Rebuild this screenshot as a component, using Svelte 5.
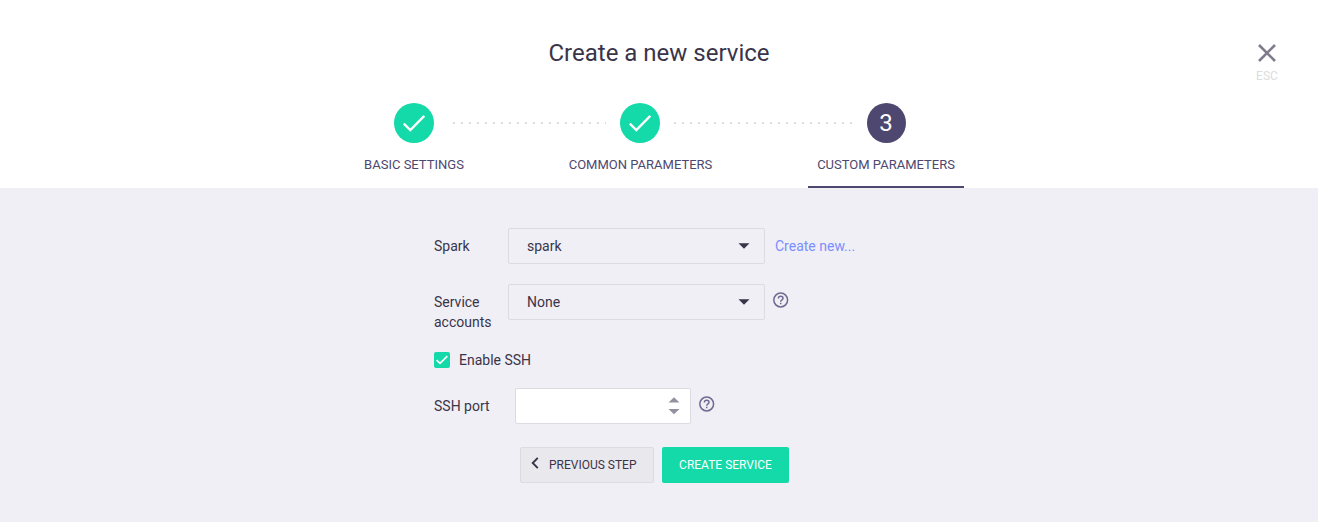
<script>
  const steps = [
    { label: 'BASIC SETTINGS', done: true, width: 118 },
    { label: 'COMMON PARAMETERS', done: true, width: 161 },
    { label: 'CUSTOM PARAMETERS', done: false, width: 156 },
  ];
  let ssh = $state(true);
</script>

{#snippet help()}
  <svg class="help" width="16" height="16" viewBox="0 0 16 16" fill="none" stroke="#6e6990">
    <circle cx="7.7" cy="8" r="6.9" stroke-width="1.5" />
    <path d="M5.4 6.5C5.4 5.1 6.4 4.3 7.7 4.3S10 5.2 10 6.4C10 7.9 7.7 8 7.7 9.7M7.7 10.8V12.3" stroke-width="1.5" />
  </svg>
{/snippet}

<div class="page">
  <header>
    <h1>Create a new service</h1>
    <button class="close" aria-label="Close">
      <svg width="20" height="20" viewBox="0 0 20 20"><path d="M2 2L18 18M18 2L2 18" stroke="#7f7b8c" stroke-width="2.6" fill="none" /></svg>
      <span>ESC</span>
    </button>
    <nav>
      {#each steps as step, i}
        {#if i > 0}<div class="line line{i}"></div>{/if}
        <div class="step" class:active={!step.done} style="width: {step.width}px">
          <div class="circle">
            {#if step.done}
              <svg width="40" height="40" viewBox="0 0 40 40"><path d="M9.8 20.6L16.3 27L30.3 12.8" fill="none" stroke="#fff" stroke-width="2.4" /></svg>
            {:else}{i + 1}{/if}
          </div>
          <span class="label">{step.label}</span>
        </div>
      {/each}
    </nav>
  </header>

  <main>
    <div class="row spark">
      <span class="name">Spark</span>
      <div class="select">spark<svg width="12" height="6" viewBox="0 0 12 6"><path d="M.5 .3H11.5L6 5.8Z" fill="#3a3449" /></svg></div>
      <a href="#new">Create new...</a>
    </div>
    <div class="row accounts">
      <span class="name">Service accounts</span>
      <div class="select">None<svg width="12" height="6" viewBox="0 0 12 6"><path d="M.5 .3H11.5L6 5.8Z" fill="#3a3449" /></svg></div>
      {@render help()}
    </div>
    <button class="check" role="checkbox" aria-checked={ssh} onclick={() => (ssh = !ssh)}>
      <span class="box"><svg width="16" height="16" viewBox="0 0 16 16">{#if ssh}<path d="M2.6 8.2L6 11.4L13.3 4.2" fill="none" stroke="#fff" stroke-width="1.7" />{/if}</svg></span>
      Enable SSH
    </button>
    <div class="row port">
      <span class="name">SSH port</span>
      <div class="number">
        <svg width="12" height="18" viewBox="0 0 12 18" fill="#93909f"><path d="M.5 5.5L6 .2L11.5 5.5ZM.5 12L6 17.3L11.5 12Z" /></svg>
      </div>
      {@render help()}
    </div>
    <div class="actions">
      <button class="prev">
        <svg width="8" height="12" viewBox="0 0 8 12"><path d="M6.8 .8L1.7 6L6.8 11.2" fill="none" stroke="#3a3449" stroke-width="1.9" /></svg>PREVIOUS STEP
      </button>
      <button class="create">CREATE SERVICE</button>
    </div>
  </main>
</div>

<style>
  :global(body) { margin: 0; }
  .page {
    position: relative;
    height: 522px;
    overflow: hidden;
    background: #f0eff5;
    color: #3a3449;
    font: 14px/20px Roboto, sans-serif;
  }
  button { border: 0; padding: 0; background: none; color: inherit; font: inherit; }
  header { box-sizing: border-box; height: 188px; padding-top: 37px; background: #fff; }
  h1 { margin: 0; font-size: 24px; line-height: 32px; font-weight: 400; text-align: center; }
  .close { position: absolute; top: 43px; left: 1247px; width: 40px; display: flex; flex-direction: column; align-items: center; }
  .close span { margin-top: 6px; font-size: 12px; line-height: 14px; color: #dddce0; }
  nav { display: flex; margin: 34px 0 0 355px; }
  .step { box-sizing: border-box; height: 85px; display: flex; flex-direction: column; align-items: center; }
  .step.active { border-bottom: 2px solid #4e4770; }
  .circle { width: 40px; height: 40px; border-radius: 50%; background: #14d9a8; color: #fff; font-size: 24px; line-height: 40px; text-align: center; }
  .line1 + .step .circle { margin-right: 1px; }
  .active .circle { width: 39px; background: #4e4770; }
  .circle svg { display: block; }
  .label { margin-top: 12px; font-size: 13px; color: #4e4770; white-space: nowrap; }
  .line { height: 2px; margin-top: 19px; background: repeating-linear-gradient(90deg, #dddce0 0 2px, transparent 2px 8px); }
  .line1 { width: 153px; margin-left: -20px; margin-right: -46px; }
  .line2 { width: 180px; margin-left: -47px; margin-right: -46px; }

  main { padding: 40px 0 0 434px; }
  .row { display: flex; align-items: flex-start; }
  .name { width: 74px; flex: none; padding-top: 8px; }
  .spark { height: 56px; }
  .accounts { height: 66px; }
  .select { box-sizing: border-box; width: 257px; height: 36px; padding: 0 14px 0 18px; border: 1px solid #dcdbe1; border-radius: 2px; display: flex; align-items: center; justify-content: space-between; }
  a { margin: 8px 0 0 10px; color: #7b8eff; text-decoration: none; }
  .help { margin: 8px 0 0 8px; flex: none; }
  .check { display: flex; align-items: center; height: 20px; }
  .box { width: 16px; height: 16px; margin-right: 9px; border-radius: 2px; background: #14d9a8; }
  .box svg { display: block; }
  .port { height: 59px; margin-top: 18px; }
  .port .name { width: 81px; }
  .number { box-sizing: border-box; width: 176px; height: 36px; padding-right: 10px; border: 1px solid #dcdbe1; border-radius: 2px; background: #fff; display: flex; align-items: center; justify-content: flex-end; }
  .actions { display: flex; gap: 8px; margin-left: 86px; }
  .actions button { box-sizing: border-box; height: 36px; border-radius: 2px; font-size: 12px; }
  .prev { width: 134px; padding-left: 10px; border: 1px solid #dcdbe1; background: #e9e8ed; display: flex; align-items: center; }
  .prev svg { margin: -4px 10px 0 0; }
  .create { width: 127px; background: #14d9a8; color: #fff; }
</style>
